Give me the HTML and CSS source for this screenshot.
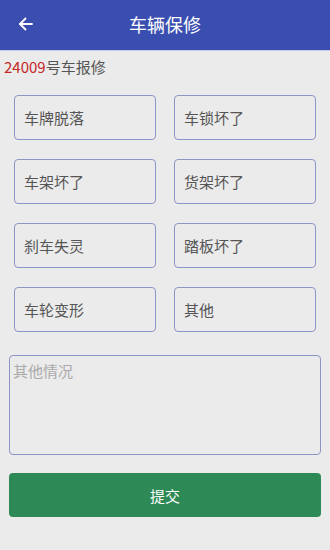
FILE: index.html
```html
<!DOCTYPE html>
<html lang="zh-CN">
<head>
    <meta charset="UTF-8">
    <meta name="viewport" content="width=device-width, initial-scale=1.0">
    <title>车辆保修</title>
    <link rel="stylesheet" href="styles.css">
</head>
<body>
<div class="header">
    <span class="back">
        <svg width="16" height="16" viewBox="0 0 16 16" fill="none" stroke="#fff" stroke-width="1.8" stroke-linecap="round" stroke-linejoin="round">
            <path d="M14 8H2"></path>
            <path d="M7.5 2.5L2 8l5.5 5.5"></path>
        </svg>
    </span>
    <h1>车辆保修</h1>
</div>

<div class="bike-no"><span class="num">24009</span>号车报修</div>

<div class="options">
    <div class="option">车牌脱落</div>
    <div class="option">车锁坏了</div>
    <div class="option">车架坏了</div>
    <div class="option">货架坏了</div>
    <div class="option">刹车失灵</div>
    <div class="option">踏板坏了</div>
    <div class="option">车轮变形</div>
    <div class="option">其他</div>
</div>

<div class="form">
    <textarea placeholder="其他情况"></textarea>
    <button type="button">提交</button>
</div>
</body>
</html>
```

FILE: styles.css
```css
* {
    margin: 0;
    padding: 0;
    box-sizing: border-box;
    font-family: "Noto Sans CJK SC", "Liberation Sans", sans-serif;
}

body {
    background: #ebebeb;
    width: 330px;
    min-height: 550px;
}

.header {
    position: relative;
    height: 51px;
    background: #3a4eb0;
    border-bottom: 1px solid #c3c9ec;
    display: flex;
    align-items: center;
    justify-content: center;
}

.header h1 {
    color: #fff;
    font-size: 18px;
    font-weight: 400;
    margin-top: -2px;
}

.back {
    position: absolute;
    left: 18px;
    top: 16px;
    width: 16px;
    height: 16px;
    display: flex;
}

.bike-no {
    padding: 6px 0 0 4px;
    font-size: 15px;
    line-height: 20px;
    color: #555;
}

.bike-no .num {
    color: #c62828;
}

.options {
    display: grid;
    grid-template-columns: 142px 142px;
    grid-auto-rows: 45px;
    column-gap: 18px;
    row-gap: 19px;
    padding: 18px 0 0 14px;
}

.option {
    border: 1px solid #8f94c6;
    border-radius: 4px;
    display: flex;
    align-items: center;
    padding-left: 9px;
    font-size: 15px;
    color: #555;
}

.form {
    display: flex;
    flex-direction: column;
    padding: 23px 9px 0 9px;
    gap: 18px;
}

textarea {
    height: 100px;
    border: 1px solid #8f94c6;
    border-radius: 4px;
    background: transparent;
    padding: 5px 3px;
    font-size: 15px;
    line-height: 20px;
    color: #555;
    resize: none;
    outline: none;
}

textarea::placeholder {
    color: #aaa;
}

button {
    height: 44px;
    border: none;
    border-radius: 4px;
    background: #2d8a56;
    color: #fff;
    font-size: 15px;
}
```
